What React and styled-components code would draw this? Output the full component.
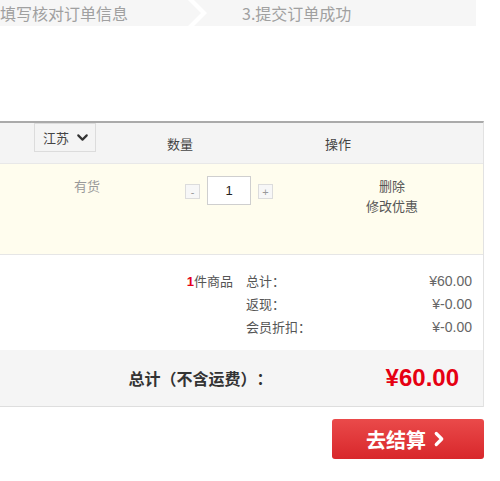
import React from 'react';
import styled, {createGlobalStyle} from "styled-components";
import {ChevronDown, ChevronRight} from "lucide-react";

const GlobalStyle = createGlobalStyle `
  body {
    margin: 0;
    background: white;
    font-family: "Noto Sans CJK SC", "Liberation Sans", sans-serif;
    color: #333;
    text-spacing-trim: space-all;
  }
`;

const Page = styled.div `
  width: 500px;
  height: 481px;
  overflow: hidden;
`;

const StepBar = styled.div `
  width: 476px;
  height: 26px;
  display: flex;
  background-color: #f6f6f6;
`;

const Step = styled.div `
  width: ${(props) => props.width || 'auto'};
  flex: ${(props) => props.grow ? 1 : 'none'};
  display: flex;
  align-items: center;
  padding-left: ${(props) => props.indent}px;
  font-size: 16px;
  color: #a0a0a0;
  white-space: nowrap;
`;

const StepSeparator = styled.svg `
  flex: none;
  display: block;
`;

const CartTable = styled.div `
  width: 483px;
  margin-top: 95px;
  border-top: 2px solid #aaa;
  border-right: 1px solid #e2e2e2;
`;

const HeaderRow = styled.div `
  height: 40px;
  display: grid;
  grid-template-columns: 130px 100px 58px 100px;
  background-color: #f4f4f4;
  border-bottom: 1px solid #e8e8e8;
  font-size: 13px;
`;

const HeaderCell = styled.div `
  display: flex;
  align-items: center;
  justify-content: center;
  color: #444;
`;

const ProvinceSelect = styled.div `
  align-self: start;
  margin-left: 34px;
  width: 62px;
  height: 29px;
  box-sizing: border-box;
  border: 1px solid #dcdcdc;
  display: flex;
  align-items: center;
  gap: 5px;
  padding-left: 8px;
  font-size: 13px;
  color: #444;
`;

const ItemRow = styled.div `
  height: 91px;
  box-sizing: border-box;
  padding-top: 12px;
  display: flex;
  align-items: flex-start;
  background-color: #fffdee;
  border-bottom: 1px solid #e6e6e6;
  font-size: 13px;
  line-height: 20px;
`;

const StockCell = styled.div `
  width: 174px;
  text-align: center;
  color: #999;
`;

const QuantityControl = styled.div `
  margin-left: 11px;
  display: flex;
  align-items: center;
  gap: 7px;
`;

const StepButton = styled.div `
  width: 15px;
  height: 15px;
  box-sizing: border-box;
  border: 1px solid #dcdcdc;
  background-color: #f7f7f7;
  display: flex;
  align-items: center;
  justify-content: center;
  font-family: "Liberation Sans", sans-serif;
  font-size: 11px;
  color: #999;
  margin-top: 2px;
`;

const QuantityInput = styled.div `
  width: 44px;
  height: 29px;
  box-sizing: border-box;
  border: 1px solid #cfcfcf;
  background-color: white;
  display: flex;
  align-items: center;
  justify-content: center;
  font-family: "Liberation Sans", sans-serif;
  font-size: 13px;
  color: #222;
`;

const ActionCell = styled.div `
  margin-left: 69px;
  width: 100px;
  display: flex;
  flex-direction: column;
  align-items: center;
  color: #555;
`;

const Summary = styled.div `
  height: 95px;
  box-sizing: border-box;
  padding: 14px 11px 0 0;
  display: grid;
  grid-template-columns: 233px 1fr auto;
  grid-auto-rows: 23px;
  column-gap: 13px;
  align-items: center;
  font-size: 13px;
  color: #555;
`;

const ItemCount = styled.div `
  text-align: right;
  color: #555;
`;

const CountNumber = styled.span `
  color: #e4001b;
  font-weight: bold;
  font-family: "Liberation Sans", sans-serif;
`;

const SummaryValue = styled.div `
  text-align: right;
  font-family: "Liberation Sans", sans-serif;
  font-size: 14px;
  color: #666;
`;

const TotalBar = styled.div `
  height: 56px;
  display: flex;
  align-items: center;
  justify-content: flex-end;
  padding-right: 24px;
  background-color: #f5f5f5;
  border-bottom: 1px solid #dedede;
`;

const TotalLabel = styled.div `
  font-size: 16px;
  font-weight: bold;
  color: #333;
`;

const TotalValue = styled.div `
  margin-left: 113px;
  font-family: "Liberation Sans", sans-serif;
  font-size: 24px;
  font-weight: bold;
  color: #e60012;
`;

const Footer = styled.div `
  width: 484px;
  display: flex;
  justify-content: flex-end;
  margin-top: 12px;
`;

const CheckoutButton = styled.button `
  width: 152px;
  height: 40px;
  border: none;
  border-radius: 3px;
  background: linear-gradient(#ea4a4a, #d8272b);
  color: white;
  font-family: "Noto Sans CJK SC", sans-serif;
  font-size: 20px;
  font-weight: bold;
  display: flex;
  align-items: center;
  justify-content: center;
  gap: 2px;
  padding: 0;
`;

const summaryRows = [
    {count: true, label: '总计：', value: '¥60.00'},
    {label: '返现：', value: '¥-0.00'},
    {label: '会员折扣：', value: '¥-0.00'},
];

const App = () => {
    return (
        <Page>
            <GlobalStyle/>
            <StepBar>
                <Step width="185px" indent={-5}>填写核对订单信息</Step>
                <StepSeparator width="25" height="26" viewBox="0 0 25 26">
                    <polygon points="3,0 9,0 22,13 9,26 3,26 16,13" fill="#ffffff"/>
                </StepSeparator>
                <Step grow indent={32}>3.提交订单成功</Step>
            </StepBar>
            <CartTable>
                <HeaderRow>
                    <ProvinceSelect>
                        江苏
                        <ChevronDown size={17} strokeWidth={3} color="#333"/>
                    </ProvinceSelect>
                    <HeaderCell>数量</HeaderCell>
                    <div/>
                    <HeaderCell>操作</HeaderCell>
                </HeaderRow>
                <ItemRow>
                    <StockCell>有货</StockCell>
                    <QuantityControl>
                        <StepButton>-</StepButton>
                        <QuantityInput>1</QuantityInput>
                        <StepButton>+</StepButton>
                    </QuantityControl>
                    <ActionCell>
                        <span>删除</span>
                        <span>修改优惠</span>
                    </ActionCell>
                </ItemRow>
                <Summary>
                    {summaryRows.map((row) => (
                        <React.Fragment key={row.label}>
                            <ItemCount>
                                {row.count && <><CountNumber>1</CountNumber>件商品</>}
                            </ItemCount>
                            <div>{row.label}</div>
                            <SummaryValue>{row.value}</SummaryValue>
                        </React.Fragment>
                    ))}
                </Summary>
                <TotalBar>
                    <TotalLabel>总计（不含运费）：</TotalLabel>
                    <TotalValue>¥60.00</TotalValue>
                </TotalBar>
            </CartTable>
            <Footer>
                <CheckoutButton>
                    去结算
                    <ChevronRight size={22} strokeWidth={3.5}/>
                </CheckoutButton>
            </Footer>
        </Page>
    );
};

export default App;
